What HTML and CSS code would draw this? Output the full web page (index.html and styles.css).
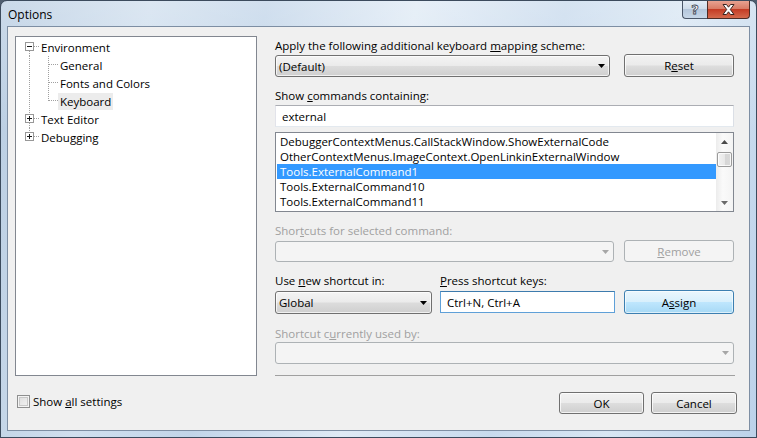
FILE: index.html
```html
<!DOCTYPE html>
<html>
<head>
<meta charset="utf-8">
<title>Options</title>
<link rel="stylesheet" href="styles.css">
</head>
<body>
<div class="window">
  <div class="titlebar">
    <span class="title">Options</span>
    <div class="caption">
      <div class="cap-btn help"><span>?</span></div>
      <div class="cap-btn close">
        <svg width="13" height="11" viewBox="0 0 13 11"><polygon points="1,0.5 4.5,0.5 6.5,3.2 8.5,0.5 12,0.5 8.3,5.5 12,10.5 8.5,10.5 6.5,7.8 4.5,10.5 1,10.5 4.7,5.5" fill="#fff" stroke="#3b2420" stroke-width="1" stroke-linejoin="round"/></svg>
      </div>
    </div>
  </div>
  <div class="client">
    <div class="main">
      <div class="tree">
        <div class="node">
          <svg class="lines root" width="23" height="18" viewBox="0 0 23 18">
            <line x1="13.5" y1="13" x2="13.5" y2="18" class="dot"/>
            <line x1="18" y1="8.5" x2="23" y2="8.5" class="dot"/>
            <rect x="9.5" y="4.5" width="8" height="8" class="box"/>
            <line x1="11" y1="8.5" x2="16" y2="8.5" class="sign"/>
          </svg>
          <span class="label">Environment</span>
        </div>
        <div class="node">
          <svg class="lines" width="42" height="18" viewBox="0 0 42 18">
            <line x1="13.5" y1="0" x2="13.5" y2="18" class="dot"/>
            <line x1="32.5" y1="0" x2="32.5" y2="18" class="dot"/>
            <line x1="33" y1="8.5" x2="42" y2="8.5" class="dot"/>
          </svg>
          <span class="label">General</span>
        </div>
        <div class="node">
          <svg class="lines" width="42" height="18" viewBox="0 0 42 18">
            <line x1="13.5" y1="0" x2="13.5" y2="18" class="dot"/>
            <line x1="32.5" y1="0" x2="32.5" y2="18" class="dot"/>
            <line x1="33" y1="8.5" x2="42" y2="8.5" class="dot"/>
          </svg>
          <span class="label">Fonts and Colors</span>
        </div>
        <div class="node">
          <svg class="lines" width="42" height="18" viewBox="0 0 42 18">
            <line x1="13.5" y1="0" x2="13.5" y2="18" class="dot"/>
            <line x1="32.5" y1="0" x2="32.5" y2="9" class="dot"/>
            <line x1="33" y1="8.5" x2="42" y2="8.5" class="dot"/>
          </svg>
          <span class="label selected">Keyboard</span>
        </div>
        <div class="node">
          <svg class="lines root" width="23" height="18" viewBox="0 0 23 18">
            <line x1="13.5" y1="0" x2="13.5" y2="4" class="dot"/>
            <line x1="13.5" y1="13" x2="13.5" y2="18" class="dot"/>
            <line x1="18" y1="8.5" x2="23" y2="8.5" class="dot"/>
            <rect x="9.5" y="4.5" width="8" height="8" class="box"/>
            <line x1="11" y1="8.5" x2="16" y2="8.5" class="sign"/>
            <line x1="13.5" y1="6" x2="13.5" y2="11" class="sign"/>
          </svg>
          <span class="label">Text Editor</span>
        </div>
        <div class="node">
          <svg class="lines root" width="23" height="18" viewBox="0 0 23 18">
            <line x1="13.5" y1="0" x2="13.5" y2="4" class="dot"/>
            <line x1="18" y1="8.5" x2="23" y2="8.5" class="dot"/>
            <rect x="9.5" y="4.5" width="8" height="8" class="box"/>
            <line x1="11" y1="8.5" x2="16" y2="8.5" class="sign"/>
            <line x1="13.5" y1="6" x2="13.5" y2="11" class="sign"/>
          </svg>
          <span class="label">Debugging</span>
        </div>
      </div>

      <div class="panel">
        <div class="lbl lbl-scheme">Apply the following additional keyboard <u>m</u>apping scheme:</div>
        <div class="row row-scheme">
          <div class="combo combo-scheme"><span>(Default)</span><svg class="arrow" width="7" height="4" viewBox="0 0 7 4"><polygon points="0,0 7,0 3.5,4" fill="#000"/></svg></div>
          <div class="btn">R<u>e</u>set</div>
        </div>

        <div class="lbl lbl-show">Show <u>c</u>ommands containing:</div>
        <div class="textbox tb-filter">external</div>

        <div class="listbox">
          <div class="items">
            <div class="item">DebuggerContextMenus.CallStackWindow.ShowExternalCode</div>
            <div class="item">OtherContextMenus.ImageContext.OpenLinkinExternalWindow</div>
            <div class="item selected">Tools.ExternalCommand1</div>
            <div class="item">Tools.ExternalCommand10</div>
            <div class="item">Tools.ExternalCommand11</div>
          </div>
          <div class="vscroll">
            <div class="sb-btn"><svg width="7" height="4" viewBox="0 0 7 4"><polygon points="3.5,0 7,4 0,4" fill="#4a4a4a"/></svg></div>
            <div class="thumb"></div>
            <div class="sb-track"></div>
            <div class="sb-btn"><svg width="7" height="4" viewBox="0 0 7 4"><polygon points="0,0 7,0 3.5,4" fill="#6a6a6a"/></svg></div>
          </div>
        </div>

        <div class="lbl lbl-shortcuts disabled">Shor<u>t</u>cuts for selected command:</div>
        <div class="row row-shortcuts">
          <div class="combo combo-shortcuts disabled"><span></span><svg class="arrow" width="7" height="4" viewBox="0 0 7 4"><polygon points="0,0 7,0 3.5,4" fill="#a6a6a6"/></svg></div>
          <div class="btn disabled"><u>R</u>emove</div>
        </div>

        <div class="row row-labels">
          <div class="lbl lbl-use">Use <u>n</u>ew shortcut in:</div>
          <div class="lbl lbl-press"><u>P</u>ress shortcut keys:</div>
        </div>
        <div class="row row-assign">
          <div class="combo combo-global"><span>Global</span><svg class="arrow" width="7" height="4" viewBox="0 0 7 4"><polygon points="0,0 7,0 3.5,4" fill="#000"/></svg></div>
          <div class="textbox tb-keys focused">Ctrl+N, Ctrl+A</div>
          <div class="btn default">A<u>s</u>sign</div>
        </div>

        <div class="lbl lbl-used disabled">Shortcut c<u>u</u>rrently used by:</div>
        <div class="combo combo-used disabled"><span></span><svg class="arrow" width="7" height="4" viewBox="0 0 7 4"><polygon points="0,0 7,0 3.5,4" fill="#a6a6a6"/></svg></div>

        <div class="separator"></div>
      </div>
    </div>

    <div class="footer">
      <label class="check"><span class="checkbox"></span><span>Show <u>a</u>ll settings</span></label>
      <div class="footer-btns">
        <div class="btn btn-ok">OK</div>
        <div class="btn btn-cancel">Cancel</div>
      </div>
    </div>
  </div>
</div>
</body>
</html>
```

FILE: styles.css
```css
* { box-sizing: border-box; }

html, body {
  margin: 0;
  padding: 0;
}

body {
  width: 757px;
  height: 438px;
  overflow: hidden;
  background: #4f5e70;
  font-family: "Open Sans", "Noto Sans", sans-serif;
  font-size: 11.5px;
  color: #000;
}

u { text-decoration: underline; text-underline-offset: 1px; }

.window {
  width: 757px;
  height: 438px;
  border: 1px solid #3c4b5d;
  border-radius: 7px 7px 0 0;
  background:
    linear-gradient(180deg, rgba(255,255,255,0.25) 0%, rgba(255,255,255,0) 30%),
    linear-gradient(100deg, #b9cde2 0%, #d0dfee 18%, #c2d5e9 32%, #dfeaf5 50%, #c8daed 68%, #d8e6f3 82%, #bcd2ea 100%);
  display: flex;
  flex-direction: column;
  padding: 0 6px 6px 6px;
}

.titlebar {
  height: 25px;
  display: flex;
  justify-content: space-between;
  align-items: flex-start;
}

.title {
  padding: 6px 0 0 1px;
  line-height: 15px;
  font-size: 12px;
  color: #000;
}

.caption {
  display: flex;
}

.cap-btn {
  height: 18px;
  display: flex;
  align-items: center;
  justify-content: center;
  border: 1px solid #4a5668;
  border-top: none;
}

.help {
  width: 25px;
  border-radius: 0 0 0 4px;
  border-right: none;
  background: linear-gradient(180deg, #e3ecf6 0%, #cfdcea 45%, #b4c6db 50%, #c7d7e8 100%);
}

.help span {
  font-family: "DejaVu Sans", sans-serif;
  font-weight: bold;
  font-size: 13px;
  color: #fff;
  -webkit-text-stroke: 0.8px #3d4654;
  line-height: 1;
}

.close {
  width: 43px;
  border-radius: 0 0 4px 0;
  border-color: #4e2c25;
  background: linear-gradient(180deg, #e8a291 0%, #d97c66 45%, #c43c25 50%, #d46a4d 100%);
}

.client {
  flex: 1;
  border: 1px solid #7d8ea3;
  background: #f0f0f0;
  display: flex;
  flex-direction: column;
}

.main {
  display: flex;
  padding: 9px 0 0 7px;
}

/* Tree */
.tree {
  width: 242px;
  height: 340px;
  border: 1px solid #828790;
  background: #fff;
  padding-top: 1px;
  display: flex;
  flex-direction: column;
}

.node {
  height: 18px;
  display: flex;
  align-items: center;
}

.lines { flex: none; display: block; }

.dot {
  stroke: #a0a0a0;
  stroke-width: 1;
  stroke-dasharray: 1 1;
}

.box {
  fill: #fff;
  stroke: #989898;
  stroke-width: 1;
}

.sign {
  stroke: #1a1a1a;
  stroke-width: 1;
}

.label {
  padding: 0 2px;
  height: 17px;
  line-height: 17px;
}

.label.selected {
  background: #ececec;
}

/* Right panel */
.panel {
  width: 460px;
  margin-left: 18px;
  display: flex;
  flex-direction: column;
}

.lbl {
  line-height: 15px;
  height: 15px;
  white-space: nowrap;
}

.disabled { color: #a0a0a0; }

.row {
  display: flex;
  align-items: flex-start;
}

.lbl-scheme { margin-top: 2px; }

.row-scheme {
  margin-top: 1px;
  width: 459px;
  justify-content: space-between;
}

.combo {
  display: flex;
  align-items: center;
  justify-content: space-between;
  padding: 0 4px 0 3px;
  border: 1px solid #707070;
  border-radius: 3px;
  background: linear-gradient(180deg, #f4f4f4 0%, #ebebeb 48%, #dcdcdc 52%, #cfcfcf 100%);
  box-shadow: inset 0 0 0 1px rgba(255,255,255,0.7);
  white-space: nowrap;
}

.combo .arrow { flex: none; display: block; }

.combo.disabled {
  border-color: #adb2b5;
  background: #f4f4f4;
  box-shadow: none;
}

.combo-scheme {
  width: 335px;
  height: 22px;
  margin-top: 1px;
}

.btn {
  width: 110px;
  height: 23px;
  display: flex;
  align-items: center;
  justify-content: center;
  border: 1px solid #707070;
  border-radius: 3px;
  background: linear-gradient(180deg, #f2f2f2 0%, #ebebeb 48%, #dddddd 52%, #cfcfcf 100%);
  box-shadow: inset 0 0 0 1px rgba(255,255,255,0.75);
  white-space: nowrap;
}

.btn.disabled {
  border-color: #adb2b5;
  background: #f4f4f4;
  box-shadow: none;
  color: #a0a0a0;
}

.btn.default {
  border-color: #3c7fb1;
  background: linear-gradient(180deg, #eaf6fd 0%, #d9f0fc 48%, #bee6fd 52%, #a7d9f5 100%);
  box-shadow: inset 0 0 0 1px rgba(255,255,255,0.6);
}

.lbl-show { margin-top: 11px; }

.textbox {
  height: 22px;
  border: 1px solid #abadb3;
  border-left-color: #e2e3ea;
  border-right-color: #dbdfe6;
  border-bottom-color: #e3e9ef;
  background: #fff;
  padding: 0 6px;
  display: flex;
  align-items: center;
  white-space: nowrap;
}

.tb-filter {
  width: 459px;
  margin-top: 2px;
}

.listbox {
  width: 459px;
  height: 80px;
  margin-top: 5px;
  border: 1px solid #828790;
  background: #fff;
  display: flex;
}

.items {
  flex: 1;
  padding: 1px 0 0 1px;
  display: flex;
  flex-direction: column;
}

.item {
  height: 15px;
  line-height: 15px;
  padding-left: 3px;
  white-space: nowrap;
  overflow: hidden;
}

.item.selected {
  background: #3399ff;
  color: #fff;
}

.vscroll {
  width: 17px;
  display: flex;
  flex-direction: column;
  background: linear-gradient(90deg, #ececec 0%, #fafafa 40%, #f4f4f4 100%);
}

.sb-btn {
  height: 17px;
  display: flex;
  align-items: center;
  justify-content: center;
}

.thumb {
  height: 15px;
  margin: 2px 1px 0 1px;
  border: 1px solid #9b9b9b;
  border-radius: 2px;
  background: linear-gradient(90deg, #f3f3f3 0%, #e8e8e8 50%, #d6d6d6 51%, #d9d9d9 100%);
  box-shadow: inset 0 0 0 1px rgba(255,255,255,0.8);
}

.sb-track { flex: 1; }

.lbl-shortcuts { margin-top: 11px; }

.row-shortcuts {
  margin-top: 2px;
  width: 459px;
  justify-content: space-between;
}

.combo-shortcuts {
  width: 339px;
  height: 21px;
  margin-top: 1px;
}

.row-shortcuts .btn { height: 22px; }

.row-labels { margin-top: 11px; }

.lbl-use { width: 165px; }

.row-assign {
  margin-top: 2px;
  width: 459px;
}

.combo-global {
  width: 157px;
  height: 23px;
  margin-top: 1px;
}

.tb-keys {
  width: 175px;
  margin: 1px 0 0 8px;
}

.textbox.focused {
  border-color: #5fa0d8;
  border-top-color: #3d7bad;
}

.row-assign .btn {
  height: 24px;
  margin-left: auto;
}

.lbl-used { margin-top: 12px; }

.combo-used {
  width: 459px;
  height: 22px;
  margin-top: 1px;
}

.separator {
  width: 460px;
  margin-top: 11px;
  height: 1px;
  background: #a0a0a0;
}

/* Footer */
.footer {
  margin-top: 16px;
  height: 22px;
  display: flex;
  align-items: center;
  padding: 0 12px 0 9px;
}

.check {
  display: flex;
  align-items: center;
  gap: 3px;
  margin-bottom: 3px;
}

.checkbox {
  width: 13px;
  height: 13px;
  border: 1px solid #8e8f8f;
  background: linear-gradient(135deg, #dcdcdc 0%, #f4f4f4 100%);
  box-shadow: inset 0 0 0 1px #f4f4f4, inset 0 0 0 2px #c8c8c8;
}

.footer-btns {
  margin-left: auto;
  display: flex;
  gap: 7px;
}

.btn-ok { width: 85px; height: 22px; }
.btn-cancel { width: 86px; height: 22px; }
```
